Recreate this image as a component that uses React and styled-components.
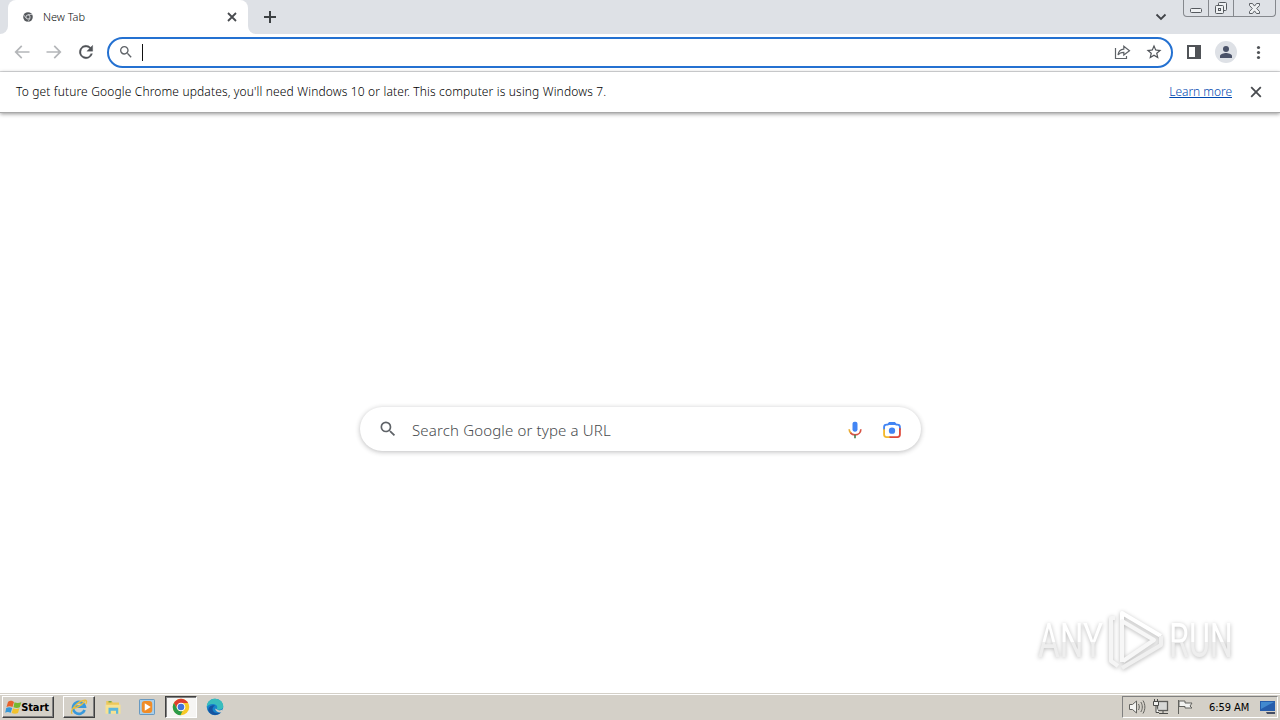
import React from "react";
import styled, { createGlobalStyle } from "styled-components";

const Global = createGlobalStyle`
  * { box-sizing: border-box; }
  body { margin: 0; background: #fff; overflow: hidden; font-family: "Noto Sans", "Open Sans", sans-serif; color: #303134; }
  svg { display: block; flex: none; }
`;

const Desktop = styled.div`
  width: 1280px; height: 720px; display: flex; flex-direction: column;
`;
const TabStrip = styled.header`
  height: 34px; background: #dee1e6; display: flex; align-items: flex-start;
`;
const StripEdge = styled.div`
  width: 8px; height: 34px; background: #fff; flex: none;
  &::before { content: ""; display: block; height: 34px; background: #dee1e6; border-bottom-right-radius: 8px; }
`;
const Tab = styled.div`
  width: 240px; height: 34px; background: #fff; border-radius: 8px 8px 0 0;
  display: flex; align-items: center; padding: 0 11px 0 15px; flex: none;
`;
const TabTitle = styled.span`
  font-size: 11px; line-height: 16px; margin-left: 10px; flex: 1; letter-spacing: -0.05px; color: #0c0d0e; font-weight: 300;
`;
const AfterTab = styled.div`
  width: 8px; height: 34px; background: #fff; flex: none;
  &::before { content: ""; display: block; height: 34px; background: #dee1e6; border-bottom-left-radius: 8px; }
`;
const NewTab = styled.div`padding: 10px 0 0 7px; flex: 1;`;
const TabSearch = styled.div`padding: 11px 16px 0 0;`;
const WindowControls = styled.div`
  display: flex; width: 93px; height: 17px; margin-right: 4px;
  border: 1px solid #85888d; border-top: 0; border-radius: 0 0 4px 4px;
`;
const WindowButton = styled.div`
  width: ${(p) => p.$w}px; height: 16px; display: flex; justify-content: center; align-items: center;
  border-right: ${(p) => (p.$last ? "0" : "1px solid #85888d")};
`;
const Toolbar = styled.nav`
  height: 38px; border-bottom: 1px solid #dcdddf; display: flex; align-items: center; padding: 0 12px 1px;
`;
const NavButtons = styled.div`display: flex; gap: 12px; width: 95px; flex: none;`;
const Omnibox = styled.div`
  width: 1066px; height: 31px; border: 2px solid #2471d1; border-radius: 16px;
  display: flex; align-items: center; padding: 0 8px 0 9px; flex: none;
`;
const Caret = styled.div`width: 1px; height: 17px; background: #111; margin-left: 8px; flex: none;`;
const OmniActions = styled.div`margin-left: auto; display: flex; gap: 14px;`;
const ToolbarActions = styled.div`display: flex; align-items: center; margin-left: 12px;`;
const Avatar = styled.div`
  width: 22px; height: 22px; border-radius: 50%; background: #dee1e6; margin: 0 12px 0 12px; flex: none;
`;
const InfoBar = styled.div`
  height: 41px; display: flex; align-items: center; padding: 0 18px 1px 16px; flex: none;
  font-size: 12px; border-bottom: 1px solid #a9a9a9; box-shadow: 0 1px 4px rgba(0,0,0,.42); z-index: 1;
`;
const InfoText = styled.span`white-space: nowrap; letter-spacing: 0.13px; font-weight: 300; word-spacing: .1px; color: #000;`;
const Learn = styled.a`
  margin-left: auto; margin-right: 18px; color: #0048b0; text-decoration: underline; letter-spacing: -0.05px;
  text-underline-offset: 1px; text-decoration-thickness: 1px; white-space: nowrap; font-weight: 300;
`;
const Page = styled.main`
  flex: 1; display: flex; flex-direction: column; align-items: center; padding-top: 294px; min-height: 0;
`;
const SearchBox = styled.div`
  width: 561px; height: 44px; border-radius: 22px; display: flex; align-items: center;
  padding: 0 19px 0 18px; flex: none; box-shadow: 0 1px 5px rgba(32,33,36,.3); margin-left: 1px;
`;
const Placeholder = styled.span`
  font-size: 15px; line-height: 22px; margin: 1px 0 0 14px; flex: 1; color: #484b4e; font-weight: 300;
  letter-spacing: 0.15px;
`;
const SearchActions = styled.div`display: flex; align-items: center; gap: 17px; padding-top: 1px;`;
const Watermark = styled.div`
  margin: 157px 47px 0 auto; width: 195px; height: 64px; display: flex; align-items: center;
  justify-content: space-between; filter: drop-shadow(0 1px 2px rgba(0,0,0,.28));
`;
const BrandWord = styled.div`
  width: 64px; height: 60px; display: flex; justify-content: ${(p) => p.$align};
  span {
    flex: none; font-family: Roboto, sans-serif; font-size: 49px; line-height: 62px; font-weight: 400; color: transparent;
    background: linear-gradient(#fff 0 53%, #eee 53%); background-clip: text; -webkit-background-clip: text;
    transform: scaleX(${(p) => p.$scale}); transform-origin: ${(p) => (p.$align === "flex-start" ? "left" : "right")};
  }
`;
const Taskbar = styled.footer`
  height: 27px; background: #d4d0c8; border-top: 1px solid #d4d0c8; box-shadow: inset 0 1px #fff;
  display: flex; align-items: flex-start; padding: 2px 2px 0; flex: none;
  font-family: "DejaVu Sans", sans-serif; font-stretch: condensed; color: #000;
`;
const TaskButton = styled.div`
  width: ${(p) => p.$w || 32}px; height: 22px; display: flex; align-items: center; justify-content: center;
  margin-left: ${(p) => p.$ml || 0}px; flex: none;
  border: 1px solid transparent;
  ${(p) => p.$raised && "border-color: #fff #404040 #404040 #fff; box-shadow: inset -1px -1px #808080;"}
  ${(p) => p.$pressed && "border-color: #404040 #fff #fff #404040; background: #f6f5f3; box-shadow: inset 1px 1px #808080;"}
`;
const StartText = styled.b`font-size: 11px; line-height: 20px; margin: 1px 2px 0 -1px; letter-spacing: -0.1px;`;
const Tray = styled.div`
  margin-left: auto; width: 156px; height: 22px; display: flex; align-items: center; padding: 0 0 0 5px;
  border: 1px solid; border-color: #808080 #fff #fff #808080;
`;
const Clock = styled.span`font-size: 11px; white-space: nowrap; margin-left: 15px; width: 44px; letter-spacing: -0.05px; flex: none;`;
const TrayIcons = styled.div`display: flex; gap: 6px;`;
const DesktopToggle = styled.div`margin-left: auto;`;

const Icon = ({ size = 20, children, box = 24, ...rest }) => (
  <svg width={size} height={size} viewBox={`0 0 ${box} ${box}`} {...rest}>{children}</svg>
);
const Magnifier = ({ size }) => (
  <Icon size={size} fill="#5f6368"><path d="M15.5 14h-.79l-.28-.27A6.47 6.47 0 0 0 16 9.5 6.5 6.5 0 1 0 9.5 16c1.61 0 3.09-.59 4.23-1.57l.27.28v.79l5 4.99L20.49 19zm-6 0C7.01 14 5 11.99 5 9.5S7.01 5 9.5 5 14 7.01 14 9.5 11.99 14 9.5 14z" /></Icon>
);
const CloseX = ({ size = 10, w = 1.8 }) => (
  <Icon size={size} box={10} stroke="#484b4f" strokeWidth={w}><path d="M1 1l8 8M9 1L1 9" /></Icon>
);
const ChromeLogo = () => (
  <Icon size={18}>
    <circle cx="12" cy="12" r="11" fill="#f7c927" />
    <path d="M2.5 6.5A11 11 0 0 1 21.5 6.5H12A5.5 5.5 0 0 0 7.2 14.7z" fill="#df3e30" />
    <path d="M2.5 6.5l4.7 8.2A5.5 5.5 0 0 0 14 17.2L11.3 23A11 11 0 0 1 2.5 6.5" fill="#2c9b48" />
    <circle cx="12" cy="12" r="5.8" fill="#fff" /><circle cx="12" cy="12" r="4.4" fill="#4273db" />
  </Icon>
);

export default function App() {
  return (
    <>
      <Global />
      <Desktop>
        <TabStrip>
          <StripEdge />
          <Tab>
            <Icon size={10}><circle cx="12" cy="12" r="11.5" fill="#55585c" /><circle cx="12" cy="12" r="5" fill="#55585c" stroke="#e2e4e6" strokeWidth="2.2" /><path d="M12 6h10M7 15L2 7M17 15l-5 8" stroke="#d8dadd" strokeWidth="1.8" /></Icon>
            <TabTitle>New Tab</TabTitle>
            <CloseX size={10} w={1.8} />
          </Tab>
          <AfterTab />
          <NewTab><Icon size={14} box={14} stroke="#3c4043" strokeWidth="2"><path d="M7 1v12M1 7h12" /></Icon></NewTab>
          <TabSearch><Icon size={12} box={12} fill="none" stroke="#404348" strokeWidth="1.8"><path d="M1.5 3.5L6 8l4.5-4.5" /></Icon></TabSearch>
          <WindowControls>
            <WindowButton $w={25}><Icon size={14} box={14} fill="#eef0f2" stroke="#55595e"><rect x="1.5" y="7.5" width="11" height="4" rx="1" /></Icon></WindowButton>
            <WindowButton $w={25}><Icon size={14} box={14} fill="#eef0f2" stroke="#55595e"><rect x="4.5" y="1.5" width="8" height="8" rx="1" /><rect x="1.5" y="4.5" width="8" height="8" rx="1" /><rect x="4.5" y="7.5" width="2" height="2" /></Icon></WindowButton>
            <WindowButton $w={41} $last><Icon size={13} box={13} fill="#eef0f2" stroke="#5d6166"><path d="M1.5 1.5h3l2 2.6 2-2.6h3v2l-2.8 3 2.8 3v2h-3l-2-2.6-2 2.6h-3v-2l2.8-3-2.8-3z" /></Icon></WindowButton>
          </WindowControls>
        </TabStrip>

        <Toolbar>
          <NavButtons>
            <Icon size={20} fill="#b4b6b9"><path d="M21 11H6.83l5.59-5.59L11 4l-8 8 8 8 1.41-1.41L6.83 13H21z" /></Icon>
            <Icon size={20} fill="#b4b6b9"><path d="M13 4l-1.41 1.41L17.17 11H3v2h14.17l-5.58 5.59L13 20l8-8z" /></Icon>
            <Icon size={20} fill="#505357" stroke="#505357" strokeWidth=".4"><path d="M17.65 6.35A8 8 0 1 0 19.73 14h-2.08A6 6 0 1 1 12 6c1.66 0 3.14.69 4.22 1.78L13 11h7V4z" /></Icon>
          </NavButtons>
          <Omnibox>
            <Magnifier size={16} />
            <Caret />
            <OmniActions>
              <Icon size={18} box={18} fill="none" stroke="#5f6368" strokeWidth="1.2"><path d="M2.5 5v10.5h11V13M5 12C5.5 8 7.6 6.2 10.8 6.1V3.2l5.7 4.6-5.7 4.2V9.3c-2.7 0-4.5.8-5.8 2.7z" /></Icon>
              <Icon size={18} fill="#4f5358"><path d="M22 9.24l-7.19-.62L12 2 9.19 8.63 2 9.24l5.46 4.73L5.82 21 12 17.27 18.18 21l-1.63-7.03zM12 15.4l-3.76 2.27 1-4.28-3.32-2.88 4.38-.38L12 6.1l1.71 4.04 4.38.38-3.32 2.88 1 4.28z" /></Icon>
            </OmniActions>
          </Omnibox>
          <ToolbarActions>
            <Icon size={18} box={18} fill="none" stroke="#505357" strokeWidth="2"><rect x="3" y="3" width="12" height="12" /><path d="M12.5 3v12" strokeWidth="5" /></Icon>
            <Avatar><Icon size={22} box={22} fill="#4a5268"><circle cx="11" cy="8" r="3" /><path d="M5 17v-2c0-2 4-3 6-3s6 1 6 3v2z" /></Icon></Avatar>
            <Icon size={18} box={18} fill="#505357"><circle cx="9.5" cy="4.5" r="1.6" /><circle cx="9.5" cy="9.5" r="1.6" /><circle cx="9.5" cy="14.5" r="1.6" /></Icon>
          </ToolbarActions>
        </Toolbar>

        <InfoBar>
          <InfoText>To get future Google Chrome updates, you'll need Windows 10 or later. This computer is using Windows 7.</InfoText>
          <Learn>Learn more</Learn>
          <CloseX size={12} w={1.5} />
        </InfoBar>

        <Page>
          <SearchBox>
            <Magnifier size={20} />
            <Placeholder>Search Google or type a URL</Placeholder>
            <SearchActions>
              <Icon size={20}>
                <rect x="9" y="2" width="6" height="12" rx="2.5" fill="#4285f4" />
                <path d="M5 11c0 2 1 4 2.6 5.2" fill="none" stroke="#e9ad35" strokeWidth="2" /><path d="M6.5 15.5a7.5 7.5 0 0 0 5.5 2.3c4.2 0 7-3 7-6.8" fill="none" stroke="#d75345" strokeWidth="2" /><path d="M12 17.8V22" stroke="#4e8253" strokeWidth="2" />
              </Icon>
              <Icon size={20} fill="none" strokeWidth="2.2">
                <path d="M2.5 12V8.5a3 3 0 0 1 3-3H7l2-2h6l2 2h1.5a3 3 0 0 1 3 3V12" stroke="#4285f4" /><path d="M7 6l2.5-3.5h5L17 6z" fill="#4285f4" />
                <path d="M2.5 11v6.5a3 3 0 0 0 3 3H10" stroke="#f4b92d" /><path d="M9 20.5h9.5a3 3 0 0 0 3-3V10" stroke="#df493b" /><circle cx="12" cy="12.8" r="3.8" fill="#4285f4" />
              </Icon>
            </SearchActions>
          </SearchBox>
          <Watermark>
            <BrandWord $scale=".68" $align="flex-start"><span>ANY</span></BrandWord>
            <svg width="58" height="62" viewBox="0 0 58 62" fill="none" strokeWidth="4" strokeLinejoin="round">
              <path d="M8 9H4v43l7 5" stroke="#f5f5f5" /><path d="M15 39V4l39 23" stroke="#fff" />
              <path d="M15 53V12l32 19-31 21" stroke="#f7f7f7" /><path d="M54 27v9L15 59" stroke="#f0f0f0" />
            </svg>
            <BrandWord $scale=".66" $align="flex-end"><span>RUN</span></BrandWord>
          </Watermark>
        </Page>

        <Taskbar>
          <TaskButton $w={52} $raised>
            <Icon size={17} box={17}><path d="M3 3c3-2 4-1 6 0L7.5 8c-2-1-4-1-6 0z" fill="#e7622b" /><path d="M9.5 3.3c2 1 4 1 6.8 0l-1.5 5c-2 1-4 1-6.3 0z" fill="#77b82f" /><path d="M1.2 9c2-1 4-1 6 0l-1.5 4.8c-2-1-4-1-5.5 0z" fill="#3498d9" /><path d="M8 9.2c2 1 4 1 6.4 0L13 14c-2 1-4 1-6.3 0z" fill="#f2c22d" /></Icon>
            <StartText>Start</StartText>
          </TaskButton>
          <TaskButton $raised $ml={9}>
            <Icon size={18} fill="none"><path d="M19.5 16a8 8 0 1 1 .3-4.5H7" stroke="#3999dc" strokeWidth="3.6" /><path d="M3 21C-2 18 11 3 20 3c4 0 1 5 1 5M4 14C9 13 16 9 20 4" stroke="#e8bd3d" strokeWidth="1.8" /></Icon>
          </TaskButton>
          <TaskButton $ml={2}>
            <Icon size={18}><path d="M3 4h7l2 2h8v14H3z" fill="#edc85a" /><path d="M2 9h20v12H2z" fill="#f7e292" /><path d="M6 21v-8h13v8h-3v-4H9v4z" fill="#5cb7dd" /><path d="M6 5h4" stroke="#78a84a" strokeWidth="2" /></Icon>
          </TaskButton>
          <TaskButton $ml={2}>
            <Icon size={18}><rect x="2" y="2" width="20" height="20" rx="1" fill="#a9cfea" stroke="#4b87b8" /><rect x="5" y="4" width="14" height="16" rx="4" fill="#f08c27" /><path d="M9 7l8 5-8 5z" fill="#fff" /></Icon>
          </TaskButton>
          <TaskButton $pressed $ml={2}><ChromeLogo /></TaskButton>
          <TaskButton $ml={2}>
            <Icon size={18}><circle cx="12" cy="12" r="11" fill="#1784cb" /><path d="M1 12C1 4 7 1 12 1c7 0 11 5 11 10 0 4-4 6-9 4 3-4-1-7-5-7-4 0-7 2-8 4z" fill="#38bdbd" /><path d="M12 10c-7 4-2 13 8 9-4 5-14 5-17-2 0-5 4-8 9-7z" fill="#1554a1" /><path d="M14 15c2 2 6 2 9 0l-2 4c-4 1-8-1-9-5z" fill="#d4d0c8" /></Icon>
          </TaskButton>
          <Tray>
            <TrayIcons>
              <Icon size={18} box={18} fill="#f4f4f2" stroke="#62625e"><path d="M1.5 6.5h3L8.5 3v12l-4-3.5h-3z" /><path d="M10.5 6c1 2 1 4 0 6M12.8 4c2 3 2 7 0 10M15 2.5c2.5 4 2.5 9 0 13" fill="none" /></Icon>
              <Icon size={18} box={18} fill="#d7d8d6" stroke="#4a4a48"><rect x="5.5" y="3.5" width="10" height="9" stroke="#5c5c59" strokeWidth="1.3" /><path d="M7 15.5h9M11 13v2" fill="none" /><path d="M1.5 3.5h5v4h-5zM2.5 1v2M5.5 1v2M4 8v6.5h3" fill="#f0f0ee" /></Icon>
              <Icon size={18} box={18} fill="#f2f2f0" stroke="#62625e"><path d="M2.5 2v14M3 3h6v2h7l-2 3 2 2H9V8.5H3z" /></Icon>
            </TrayIcons>
            <Clock>6:59 AM</Clock>
            <DesktopToggle><Icon size={18} box={18}><path d="M1 3h15v10H1z" fill="#265dac" /><path d="M2 4h13L2 11z" fill="#4289cf" /><path d="M7 14h9v2H8z" fill="#444d64" /></Icon></DesktopToggle>
          </Tray>
        </Taskbar>
      </Desktop>
    </>
  );
}
